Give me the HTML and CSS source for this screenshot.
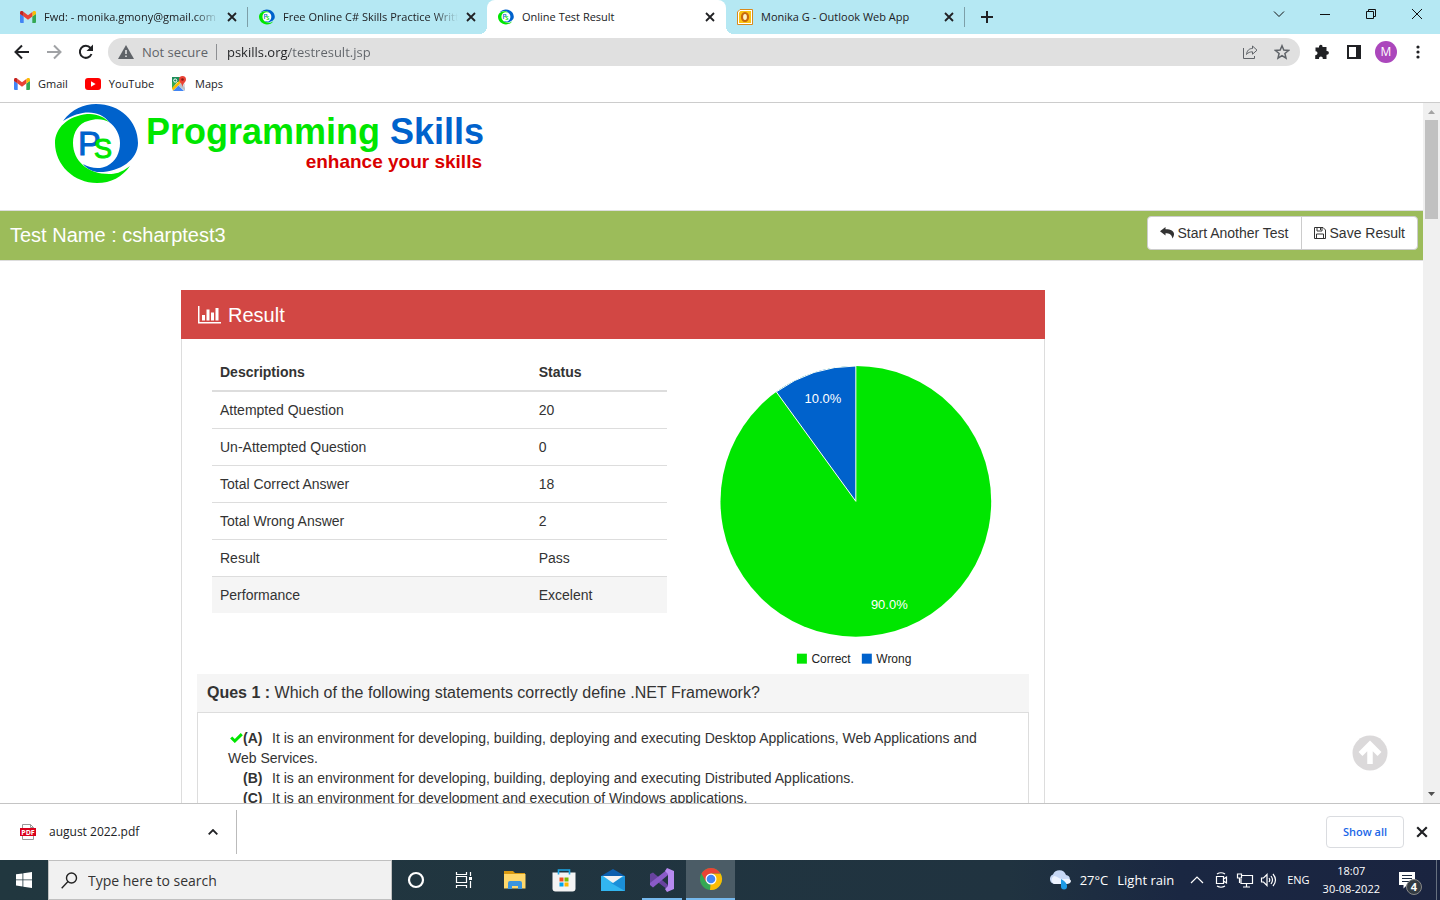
FILE: index.html
```html
<!DOCTYPE html>
<html lang="en">
<head>
<meta charset="utf-8">
<title>Online Test Result</title>
<link rel="stylesheet" href="styles.css">
</head>
<body>
<svg class="defs" aria-hidden="true">
  <symbol id="gmail" viewBox="0 0 16 12">
    <path fill="#4285f4" d="M1 12h2.7V5.5L0 2.8V11a1 1 0 0 0 1 1z"/>
    <path fill="#34a853" d="M12.3 12H15a1 1 0 0 0 1-1V2.8l-3.7 2.7z"/>
    <path fill="#fbbc04" d="M12.3 1v4.6L16 2.9V1.5C16 .1 14.400-.6 13.300.2z"/>
    <path fill="#ea4335" d="M3.700 5.600V1L8 4.200 12.300 1v4.600L8 8.800z"/>
    <path fill="#c5221f" d="M0 1.500v1.400l3.700 2.700V1L2.700.2C1.600-.6 0 .1 0 1.500z"/>
  </symbol>
  <symbol id="ps" viewBox="0 0 84 80">
    <path fill="#fff" d="M18 14h46v52H18z"/>
    <path fill="#0062cc" d="M8 17C17 5 29 0 41 0C65 0 83 17 83 39C83 56 64 69 42 68C36 67 31 64 28 60C36 65 46 65 52 62C61 57 65 49 65 39C65 31 61 23 54 18C46 7 28 4 8 17z"/>
    <path fill="#00e600" d="M54 18C47 11 40 10 32 10C13 12 0 24 0 39C0 61 19 79 42 79C56 79 67 73 75 62C66 69 60 70 54 70C33 70 18 57 18 39C18 28 24 19 33 17C41 14 49 15 54 18z"/>
    <text x="23" y="51" class="logo-p">P</text><text x="39" y="54" class="logo-s">S</text>
  </symbol>
  <symbol id="x" viewBox="0 0 10 10"><path d="M1 1l8 8M9 1L1 9" fill="none" stroke="currentColor" stroke-width="1.800"/></symbol>
</svg>

<header class="tabs">
  <div class="tab"><svg class="fav"><use href="#gmail" y="2" height="12"/></svg><span class="fade">Fwd: - monika.gmony@gmail.com</span><button aria-label="Close tab"><svg><use href="#x"/></svg></button></div>
  <div class="tab ruled"><svg class="fav"><use href="#ps"/></svg><span class="fade">Free Online C# Skills Practice Written</span><button aria-label="Close tab"><svg><use href="#x"/></svg></button></div>
  <div class="tab active"><svg class="fav"><use href="#ps"/></svg><span>Online Test Result</span><button aria-label="Close tab"><svg><use href="#x"/></svg></button></div>
  <div class="tab"><svg class="fav" viewBox="0 0 16 16"><path fill="#fff" stroke="#d98a1c" d="M3 .5h12.500v15H.5V3z"/><path fill="#fbc312" d="M3.500 2H14v12H2V3.500z"/><ellipse cx="8" cy="8" rx="3" ry="4" fill="#fff3c4" stroke="#c8690d" stroke-width="2.200"/></svg><span>Monika G - Outlook Web App</span><button aria-label="Close tab"><svg><use href="#x"/></svg></button></div>
  <button class="newtab" aria-label="New tab"><svg width="12" height="12" viewBox="0 0 12 12"><path d="M6 0v12M0 6h12" stroke="#202124" stroke-width="2"/></svg></button>
  <div class="wincontrols">
    <button aria-label="Tab search"><svg viewBox="0 0 12 12"><path d="M1 3.500l5 5 5-5"/></svg></button>
    <button aria-label="Minimize"><svg viewBox="0 0 12 12"><path d="M1 6.500h10"/></svg></button>
    <button aria-label="Restore"><svg viewBox="0 0 12 12"><path d="M1.500 3.500h7v7h-7zM3.500 3.500v-2h7v7h-2"/></svg></button>
    <button aria-label="Close"><svg viewBox="0 0 12 12"><path d="M1 1l10 10M11 1L1 11"/></svg></button>
  </div>
</header>

<nav class="toolbar">
  <button aria-label="Back"><svg viewBox="0 0 16 16"><path d="M15 8H2M8 1.500L1.500 8 8 14.500"/></svg></button>
  <button aria-label="Forward" class="dim"><svg viewBox="0 0 16 16"><path d="M1 8h13M8 1.500L14.500 8 8 14.500"/></svg></button>
  <button aria-label="Reload"><svg viewBox="0 0 16 16"><path d="M13.500 10A6 6 0 1 1 12.500 4l1.500 1.500"/><path fill="#202124" stroke="none" d="M15 0.500V7H8.500z"/></svg></button>
  <div class="omnibox">
    <svg width="16" height="14" viewBox="0 0 16 14"><path fill="#5f6368" d="M8 0l8 14H0z"/><path stroke="#e0e0e0" stroke-width="1.600" d="M8 5v4M8 10.400V12"/></svg>
    <span class="insecure">Not secure</span>
    <div class="url"><input aria-label="Address" value="pskills.org/testresult.jsp"></div>
    <button aria-label="Share"><svg viewBox="0 0 16 16"><path d="M1.500 4v10.500h11V12M4.500 10.500C5 6.500 7 4.500 10.500 4.500V2L15 6.200l-4.500 4V7.800C8 7.800 6 8.500 4.500 10.500z"/></svg></button>
    <button aria-label="Bookmark"><svg viewBox="0 0 16 16"><path stroke-width="1.500" d="M8 1.800l1.800 4.300 4.700.4-3.600 3 1.100 4.700L8 11.700l-4 2.500 1.100-4.700-3.600-3 4.700-.4z"/></svg></button>
  </div>
  <button aria-label="Extensions"><svg viewBox="0 0 16 16"><path fill="#202124" stroke="none" d="M1.500 3.500H5C4.500 0 9 0 8.500 3H12.500V7c3.200-.5 3.200 4 0 3.700V15H8.800c.2-3.200-4-3.200-3.800 0H1.200v-3.800c3 .1 3-4 .3-3.900z"/></svg></button>
  <button aria-label="Side panel"><svg viewBox="0 0 16 16"><path stroke-width="2" d="M2 2h12v12H2z"/><path fill="#202124" stroke="none" d="M10 2h4v12h-4z"/></svg></button>
  <button aria-label="Profile" class="avatar">M</button>
  <button aria-label="Menu"><svg viewBox="0 0 16 16"><g fill="#202124" stroke="none"><circle cx="8" cy="3" r="1.600"/><circle cx="8" cy="8" r="1.600"/><circle cx="8" cy="13" r="1.600"/></g></svg></button>
</nav>

<nav class="bookmarks">
  <a href="#"><svg width="16" height="12"><use href="#gmail"/></svg>Gmail</a>
  <a href="#"><svg width="16" height="12" viewBox="0 0 16 12"><rect width="16" height="12" rx="3" fill="#f00"/><path fill="#fff" d="M6 3.300v5.400L10.600 6z"/></svg>YouTube</a>
  <a href="#"><svg width="16" height="16" viewBox="0 0 16 16"><path fill="#34a853" d="M1 1h9L1 13z"/><path fill="#1e8e5a" d="M1 1h7v5H1z"/><path fill="#dadce0" d="M10 5l4 3v6L8 8z"/><path fill="#fbbc04" d="M1 12l8-8 2 2-9 9z"/><path fill="#4285f4" d="M2 15l5.500-5.500L13 15z"/><path fill="#bdc1c6" d="M7.500 9.500L10 7l4 5v3z"/><circle cx="4.200" cy="4.500" r="1.600" fill="none" stroke="#fff"/><path fill="#ea4335" d="M11.500 0A3.500 3.500 0 0 1 15 3.500C15 6 12 7 11.500 11 11 7 8 6 8 3.500A3.500 3.500 0 0 1 11.500 0z"/><circle cx="11.500" cy="3.500" r="1.300" fill="#8c1a13"/></svg>Maps</a>
</nav>

<div class="viewport">
  <main class="page">
    <div class="brand">
      <svg class="logo"><use href="#ps"/></svg>
      <div class="brandtext"><h1><span>Programming</span><span class="blue">Skills</span></h1><p>enhance your skills</p></div>
    </div>
    <div class="testbar">
      <h2>Test Name : csharptest3</h2>
      <div class="group">
        <button><svg width="14" height="12" viewBox="0 0 14 12"><path fill="#333" d="M5.500 0L0 4.300l5.500 4.200V6.200c3.800 0 6 .8 7 5.300C15.500 7 14.500 2.300 5.500 2.300z"/></svg>Start Another Test</button>
        <button><svg width="12" height="12" viewBox="0 0 12 12"><path fill="none" stroke="#333" d="M.5.500H9L11.500 3v8.500H.5zM3 .5v3.500h5V.5M2.500 11.500V7h7v4.500M6.500 1v2"/></svg>Save Result</button>
      </div>
    </div>
    <section class="panel">
      <h3><svg width="24" height="18" viewBox="0 0 24 18"><path fill="#fff" d="M0 0h1.500v16H23v1.500H0zM4 9h3v5.500H4zM8.500 3.500h3v11h-3zM13 6.500h3v8h-3zM17.500 2h3v12.500h-3z"/></svg>Result</h3>
      <div class="body">
        <div class="summary">
          <div class="stats">
            <table>
              <thead><tr><th>Descriptions</th><th>Status</th></tr></thead>
              <tbody>
                <tr><td>Attempted Question</td><td>20</td></tr>
                <tr><td>Un-Attempted Question</td><td>0</td></tr>
                <tr><td>Total Correct Answer</td><td>18</td></tr>
                <tr><td>Total Wrong Answer</td><td>2</td></tr>
                <tr><td>Result</td><td>Pass</td></tr>
                <tr class="hover"><td>Performance</td><td>Excelent</td></tr>
              </tbody>
            </table>
          </div>
          <div class="chart">
            <svg viewBox="0 0 317 320" role="img" aria-label="Correct 90%, wrong 10%">
              <circle cx="159" cy="147.500" r="135.500" fill="#00e600"/>
              <path fill="#0062cc" stroke="#fff" d="M159 147.500V12A135.500 135.500 0 0 0 79.400 37.900z"/>
              <text x="126" y="49" class="pct">10.0%</text>
              <text x="192.500" y="255" class="pct">90.0%</text>
              <path fill="#00e600" d="M100 300h10v10h-10z"/><text x="114.500" y="309">Correct</text>
              <path fill="#0062cc" d="M165 300h10v10h-10z"/><text x="179.500" y="309">Wrong</text>
            </svg>
          </div>
        </div>
        <h4><b>Ques 1 :</b> Which of the following statements correctly define .NET Framework?</h4>
        <div class="answers">
          <p><span class="mark"><svg width="13" height="10" viewBox="0 0 13 10"><path fill="none" stroke="#00e600" stroke-width="3" d="M1.200 4.500l3.600 3.500 7-6.800"/></svg></span><b>(A)</b>It is an environment for developing, building, deploying and executing Desktop Applications, Web Applications and Web Services.</p>
          <p><span class="mark"></span><b>(B)</b>It is an environment for developing, building, deploying and executing Distributed Applications.</p>
          <p><span class="mark"></span><b>(C)</b>It is an environment for development and execution of Windows applications.</p>
        </div>
      </div>
    </section>
  </main>
  <a class="totop" href="#" aria-label="Back to top"><svg viewBox="0 0 36 36"><circle cx="18" cy="18" r="17.500" fill="#dbd9da"/><path d="M18 29V10M8.500 19L18 9.500l9.500 9.500" fill="none" stroke="#fff" stroke-width="5.500"/></svg></a>
  <div class="scrollbar">
    <svg viewBox="0 0 17 17"><path fill="#a3a3a3" d="M5 11h7L8.500 7z"/></svg>
    <div class="thumb"></div>
    <svg viewBox="0 0 17 17"><path fill="#505050" d="M5 6h7l-3.500 4z"/></svg>
  </div>
</div>

<div class="downloads">
  <div class="file">
    <svg width="16" height="16" viewBox="0 0 16 16"><path fill="#fff" stroke="#999" d="M2.500.5h8l3 3v12h-11zM10.500.5v3h3"/><path fill="#d9001b" d="M0 4h16v8H0z"/><text x="8" y="10.500" class="pdf">PDF</text></svg>
    <span>august 2022.pdf</span>
    <button aria-label="Download options"><svg width="10" height="6" viewBox="0 0 10 6"><path fill="none" stroke="#202124" stroke-width="1.800" d="M.7 5.300L5 1l4.300 4.300"/></svg></button>
  </div>
  <button class="showall">Show all</button>
  <button class="dismiss" aria-label="Close downloads"><svg width="12" height="12"><use href="#x"/></svg></button>
</div>

<footer class="taskbar">
  <button class="start" aria-label="Start"><svg width="16" height="16" viewBox="0 0 16 16"><path fill="#fff" d="M0 2.300L6.500 1.400v6.100H0zM7.300 1.300L16 0v7.500H7.300zM0 8.300h6.500v6.100L0 13.600zM7.300 8.300H16V16l-8.700-1.300z"/></svg></button>
  <label class="search"><svg width="17" height="17" viewBox="0 0 17 17"><g fill="none" stroke="#222" stroke-width="1.400"><circle cx="10.500" cy="6" r="5"/><path d="M7 9.600L.7 16.200"/></g></svg><input aria-label="Search" placeholder="Type here to search"></label>
  <div class="apps">
    <button aria-label="Cortana"><svg viewBox="0 0 24 24"><circle cx="12" cy="12" r="7" fill="none" stroke="#fff" stroke-width="2.200"/></svg></button>
    <button aria-label="Task view"><svg viewBox="0 0 24 24"><path fill="none" stroke="#fff" stroke-width="1.200" d="M4.500 4v2.500h10V4M4.500 20v-2.500h10V20M4.500 8.500h10v6h-10zM18.500 4v4M18.500 13v7"/><path fill="#fff" d="M17 9h3v3h-3z"/></svg></button>
    <button class="wide" aria-label="File Explorer"><svg viewBox="0 0 24 24"><path fill="#d99a12" d="M1 3h9l2 2h10v3H1z"/><path fill="#ffd86b" d="M1 6h21.500v14.500H1z"/><path fill="#3b94dd" d="M5 21v-6q0-2 2-2h10q2 0 2 2v6h-4v-3H9v3z"/></svg></button>
    <button class="wide" aria-label="Store"><svg viewBox="0 0 24 24"><path fill="#f4f4f4" d="M.5 4.500h23v16q0 3-3 3h-17q-3 0-3-3z"/><path fill="none" stroke="#1ba8e8" stroke-width="1.600" d="M6.500 6.500V2h11v4.500"/><path fill="#f25022" d="M7.500 9.500h4v4h-4z"/><path fill="#7fba00" d="M12.500 9.500h4v4h-4z"/><path fill="#00a4ef" d="M7.500 14.500h4v4h-4z"/><path fill="#ffb900" d="M12.500 14.500h4v4h-4z"/></svg></button>
    <button class="wide" aria-label="Mail"><svg viewBox="0 0 24 24"><path fill="#0d5fae" d="M0 8l12-7 12 7v8H0z"/><path fill="#32b6f0" d="M0 8v15h24V8z"/><path fill="#1b8fd8" d="M24 8v15L10 15z"/><path fill="#f3f3f3" d="M2 8h20l-10 7z"/></svg></button>
    <button class="wide running" aria-label="Visual Studio"><svg viewBox="0 0 24 24"><path fill="#68439f" d="M0 6l3-1.500L18 17v5L5 12l-2 1.500v4L0 17z"/><path fill="#8a5bc9" d="M0 17l3 2.500L18 7V1L0 15z"/><path fill="#b78af0" d="M17 0l7 3v18l-7 3-2-3 3-3V6l-3-3z"/></svg></button>
    <button class="wide current" aria-label="Chrome"><svg viewBox="0 0 24 24"><circle cx="12" cy="12" r="11" fill="#34a853"/><path fill="#fbbc04" d="M12 12L11 23A11 11 0 0 0 21.500 6.500H12z"/><path fill="#ea4335" d="M2.500 6.500A11 11 0 0 1 21.500 6.500H12L7 15z"/><circle cx="12" cy="12" r="5.500" fill="#fff"/><circle cx="12" cy="12" r="4.300" fill="#4285f4"/></svg></button>
  </div>
  <div class="tray">
    <button class="weather"><svg width="22" height="20" viewBox="0 0 22 20"><path fill="#c7d8f5" d="M5 14a5 5 0 0 1-1-9.500A7 7 0 0 1 17 5a4.600 4.600 0 0 1 .5 9z"/><path fill="#eef4ff" d="M5 14a4.500 4.500 0 0 1 0-8c3 0 5 3 8 3s7-1 8.500 1-1 4-4 4z"/><path fill="#1e9be6" d="M12 9c5 3 6 5 6 7.500a3 3 0 0 1-6 0z"/></svg><span>27°C</span><span>Light rain</span></button>
    <button class="sys" aria-label="Hidden icons"><svg viewBox="0 0 18 18"><path d="M3 12l6-6 6 6"/></svg></button>
    <button class="sys" aria-label="Meet"><svg viewBox="0 0 18 18"><path d="M4.500 5.500h7v7h-7zM11.500 8l3-2v6l-3-2M5 3q4-2.500 8 0M5 15q4 2.500 8 0"/></svg></button>
    <button class="sys" aria-label="Network"><svg viewBox="0 0 18 18"><path d="M6 4.500h10.500v8H5V8M10.500 12.500V16M7 16h7M1.500 3h4v4h-4zM3.500 7v5"/></svg></button>
    <button class="sys" aria-label="Volume"><svg viewBox="0 0 18 18"><path d="M1.500 7h2L7 3.500v11L3.500 11h-2zM9 7q1.500 2 0 4M11 5q3 4 0 8M13 3q5 6 0 12"/></svg></button>
    <span class="lang">ENG</span>
    <div class="clock"><span>18:07</span><span>30-08-2022</span></div>
    <button class="notes" aria-label="Notifications"><svg width="24" height="24" viewBox="0 0 24 24"><path fill="#fff" d="M0 0h16v13H8l-3.500 3.500V13H0z"/><path stroke="#1c2a40" d="M3 3.500h10M3 6.500h10M3 9.500h7"/></svg><span class="badge">4</span></button>
  </div>
</footer>
</body>
</html>
```
FILE: styles.css
```css
* { box-sizing: border-box; }
html, body { height: 100%; margin: 0; }
body { display: flex; flex-direction: column; overflow: hidden; background: #fff; color: #333; font: 14px/20px "Liberation Sans", Arial, sans-serif; }
button { padding: 0; border: 0; background: none; color: inherit; font: inherit; display: flex; align-items: center; justify-content: center; flex: none; }
input { border: 0; padding: 0; background: none; font: inherit; color: inherit; outline: 0; min-width: 0; }
svg { display: block; flex: none; }
h1, h2, h3, h4, p { margin: 0; font-weight: normal; }
a { color: inherit; text-decoration: none; }
.defs { position: absolute; width: 0; height: 0; }
.tabs, .toolbar, .bookmarks, .downloads, .taskbar { display: flex; align-items: center; flex: none; font-family: "Open Sans", sans-serif; font-size: 11px; color: #202124; }

.tabs { height: 34px; background: #b5e8f3; padding-left: 9px; }
.tab { position: relative; flex: 0 1 239px; height: 34px; display: flex; align-items: center; padding: 0 11px; gap: 8px; min-width: 0; }
.tab > span { flex: 1; white-space: nowrap; overflow: hidden; }
.tab .fade { mask-image: linear-gradient(90deg, #000 86%, transparent); }
.tab button { width: 10px; height: 10px; }
.tab button svg { width: 10px; height: 10px; }
.fav { width: 16px; height: 16px; }
.ruled::before, .newtab::before { content: ""; position: absolute; left: -1px; top: 7px; width: 1px; height: 20px; background: #7d9fa8; }
.active { background: #fff; border-radius: 8px 8px 0 0; }
.active::before, .active::after { content: ""; position: absolute; bottom: 0; width: 8px; height: 8px; }
.active::before { left: -8px; background: radial-gradient(circle at 0 0, transparent 8px, #fff 8px); }
.active::after { right: -8px; background: radial-gradient(circle at 100% 0, transparent 8px, #fff 8px); }
.newtab { position: relative; width: 44px; height: 34px; }
.wincontrols { display: flex; margin-left: auto; align-self: flex-start; }
.wincontrols button { width: 46px; height: 28px; }
.wincontrols svg { width: 12px; height: 12px; fill: none; stroke: #111; }

.toolbar { height: 36px; padding: 0 6px; }
.toolbar button { width: 32px; height: 28px; }
.toolbar svg { fill: none; stroke: #202124; stroke-width: 2; }
.toolbar button svg { width: 16px; height: 16px; }
.toolbar .dim svg { stroke: #a0a2a5; }
.omnibox { flex: 1; display: flex; align-items: center; height: 28px; margin: 0 6px; padding: 0 2px 0 10px; background: #e0e0e0; border-radius: 14px; font-size: 13px; color: #5f6368; }
.omnibox > svg { stroke: none; }
.omnibox button svg { stroke: #5f6368; stroke-width: 1; }
.insecure { margin: 0 8px; }
.url { flex: 1; border-left: 1px solid #8d8f92; height: 16px; display: flex; align-items: center; padding-left: 10px; }
.url input { width: 100%; height: 20px; color: transparent; background: linear-gradient(90deg, #202124 62px, #5f6368 62px); background-clip: text; -webkit-background-clip: text; }
.toolbar .avatar { width: 22px; height: 22px; margin: 0 5px; border-radius: 50%; background: #ab47bc; color: #fff; font-size: 12px; }

.bookmarks { height: 33px; padding: 0 14px 4px; gap: 17px; border-bottom: 1px solid #ccc; }
.bookmarks a { display: flex; align-items: center; gap: 8px; }

.viewport { position: relative; flex: 1; min-height: 0; display: flex; overflow: hidden; }
.page { flex: 1; min-width: 0; overflow: hidden; }
.brand { height: 107px; display: flex; padding: 1px 0 0 55px; gap: 7px; }
.logo { width: 84px; height: 80px; }
.logo-p { font-size: 34px; fill: #0062cc; stroke: #0062cc; }
.logo-s { font-size: 27px; fill: #00e600; stroke: #00e600; }
.brandtext { width: 340px; padding-top: 8px; }
.brandtext h1 { display: flex; gap: 10px; font-size: 36px; line-height: 40px; font-weight: bold; color: #00e600; }
.brandtext .blue { color: #0062cc; }
.brandtext p { font-size: 19px; font-weight: bold; line-height: 20px; color: #d90000; text-align: right; padding-right: 4px; }
.testbar { display: flex; justify-content: space-between; height: 51px; padding: 5px 5px 0 10px; background: #9cbc5a; border: solid #ddd; border-width: 1px 0; color: #fff; }
.testbar h2 { font-size: 20px; line-height: 38px; }
.group { display: flex; height: 34px; border: 1px solid #ccc; border-radius: 4px; background: #fff; color: #333; }
.group button { padding: 0 12px; gap: 3px; }
.group button + button { border-left: 1px solid #ccc; gap: 4px; }
.panel { width: 61%; max-width: 864px; margin: 29px 0 0 181px; border: 1px solid #ddd; }
.panel h3 { display: flex; align-items: center; gap: 6px; height: 49px; margin: -1px -1px 0; padding-left: 17px; background: #d24744; color: #fff; font-size: 20px; }
.body { padding: 15px; }
.summary { display: grid; grid-template-columns: 7fr 5fr; }
.stats, .chart { padding: 0 15px; }
.chart svg { width: 100%; font-size: 12px; fill: #222; }
.chart .pct { fill: #fff; font-size: 13px; }
.pct, .pdf { text-anchor: middle; }
table { width: 100%; border-spacing: 0; table-layout: fixed; }
th, td { padding: 8px; text-align: left; line-height: 20px; }
th { border-bottom: 2px solid #ddd; width: 70%; }
th + th { width: 30%; }
tr + tr td { border-top: 1px solid #ddd; }
.hover { background: #f5f5f5; }
.panel h4 { padding: 9px 10px; background: #f5f5f5; font-size: 16px; line-height: 20px; }
.answers { border: 1px solid #ddd; padding: 15px 30px; }
.answers b { display: inline-block; width: 29px; }
.mark { display: inline-block; width: 15px; height: 10px; padding-left: 2px; }
.totop { position: absolute; right: 52px; bottom: 32px; width: 36px; height: 36px; }
.scrollbar { width: 17px; flex: none; display: flex; flex-direction: column; align-items: center; background: #f0f0f0; }
.scrollbar svg { width: 17px; height: 17px; }
.thumb { width: 13px; height: 99px; background: #c1c1c1; margin-bottom: auto; }

.downloads { height: 57px; border-top: 1px solid #c4c4c4; padding-right: 12px; background: #fff; }
.file { display: flex; align-items: center; gap: 13px; width: 237px; height: 44px; padding: 0 18px 0 20px; border-right: 1px solid #bbb; margin-right: auto; font-size: 12px; }
.file span { flex: 1; }
.chart text, .pdf { stroke: none; }
.pdf { font: bold 7px "Open Sans", sans-serif; fill: #fff; }
.showall { height: 32px; width: 78px; border: 1px solid #dadce0; border-radius: 4px; color: #1a67e8; font-weight: 600; margin-right: 12px; }

.taskbar { height: 40px; background: linear-gradient(90deg, #21373f, #203340 70%, #1a2742 82%, #1a2440); color: #fff; }
.start { width: 48px; height: 40px; }
.search { display: flex; align-items: center; gap: 10px; flex: 0 1 344px; height: 40px; padding-left: 12px; background: #f1f1f1; border: 1px solid #c0c0c0; font-size: 14px; color: #333; }
.search input { flex: 1; padding-top: 2px; }
.search input::placeholder { color: #333; opacity: 1; }
.apps { display: flex; }
.apps button { width: 48px; height: 40px; }
.apps .wide { width: 49px; }
.apps svg { width: 24px; height: 24px; }
.apps button:nth-child(2) { margin-right: 2px; }
.running { background: linear-gradient(#76b9ed, #76b9ed) center bottom / 40px 2px no-repeat; }
.apps .current { background: #4b5c66; border-bottom: 2px solid #76b9ed; }
.tray { display: flex; align-items: center; margin-left: auto; padding-right: 3px; }
.weather { gap: 9px; font-size: 13px; margin-right: 11px; }
.sys { width: 24px; height: 40px; }
.sys svg { width: 18px; height: 18px; fill: none; stroke: #fff; stroke-width: 1.2px; }
.lang { margin: 0 13px 0 6px; }
.clock { display: flex; flex-direction: column; align-items: center; line-height: 18px; }
.notes { position: relative; width: 57px; height: 40px; padding-left: 6px; border-right: 1px solid #66707f; }
.notes svg { margin-top: 8px; }
.badge { position: absolute; left: 26px; top: 19px; width: 16px; height: 16px; border: 1px solid #888; border-radius: 50%; background: #333b42; font-weight: bold; line-height: 14px; text-align: center; }
```
